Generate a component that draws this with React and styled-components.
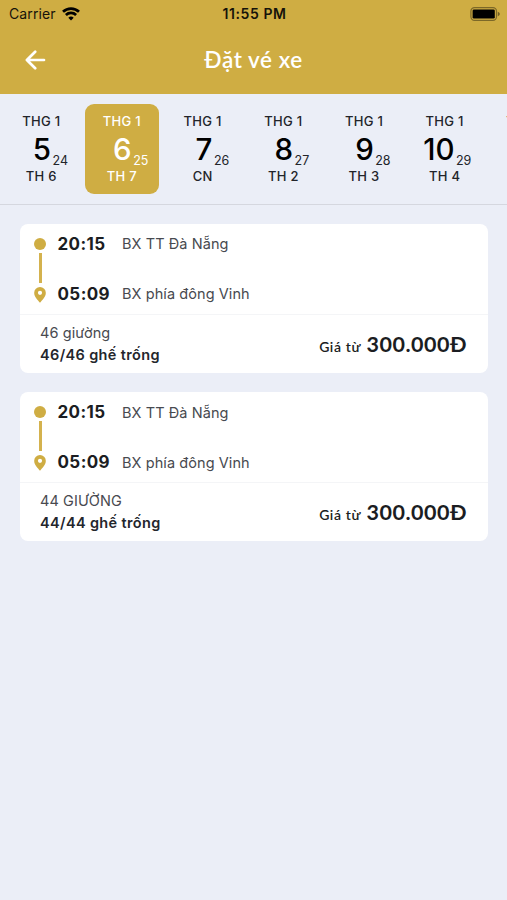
import React from 'react'
import styled, { createGlobalStyle } from 'styled-components'

const days = [
  { id: 1, month: 'THG 1', day: '5', lunar: '24', week: 'TH 6' },
  { id: 2, month: 'THG 1', day: '6', lunar: '25', week: 'TH 7' },
  { id: 3, month: 'THG 1', day: '7', lunar: '26', week: 'CN' },
  { id: 4, month: 'THG 1', day: '8', lunar: '27', week: 'TH 2' },
  { id: 5, month: 'THG 1', day: '9', lunar: '28', week: 'TH 3' },
  { id: 6, month: 'THG 1', day: '10', lunar: '29', week: 'TH 4' },
  { id: 7, month: 'THG 1', day: '11', lunar: '30', week: 'TH 5' },
]

const trips = [
  { id: 1, start: '20:15', from: 'BX TT Đà Nẵng', end: '05:09', to: 'BX phía đông Vinh', type: '46 giường', seats: '46/46 ghế trống', price: '300.000Đ' },
  { id: 2, start: '20:15', from: 'BX TT Đà Nẵng', end: '05:09', to: 'BX phía đông Vinh', type: '44 GIƯỜNG', seats: '44/44 ghế trống', price: '300.000Đ' },
]

const StatusBar = () => (
  <Status>
    <div className='carrier'>
      <span>Carrier</span>
      <svg width='18' height='14' viewBox='0 0 18 14' fill='none' stroke='#000' strokeWidth='2.7'>
        <path d='M1 4.800a11.5 11.5 0 0 1 16 0' />
        <path d='M3.9 8a7.3 7.3 0 0 1 10.2 0' />
        <path d='M9 13.4 6.3 10.7a3.9 3.9 0 0 1 5.4 0z' fill='#000' stroke='none' />
      </svg>
    </div>
    <span className='clock'>11:55 PM</span>
    <div className='battery'>
      <svg width='30' height='14' viewBox='0 0 30 14'>
        <rect x='.9' y='.6' width='25.6' height='12.8' rx='3.6' fill='none' stroke='#000' strokeOpacity='.4' strokeWidth='1.2' />
        <rect x='2.6' y='2.4' width='22.2' height='9.2' rx='1.4' fill='#000' />
        <path d='M27.8 4.8c2.6.8 2.6 3.6 0 4.4z' fill='#000' fillOpacity='.45' />
      </svg>
    </div>
  </Status>
)

const Trip = ({ trip }) => (
  <Card>
    <Route>
      <Track>
        <i className='dot' />
        <i className='line' />
        <svg width='12' height='16' viewBox='0 0 12 16'>
          <path fill='#cfad43' fillRule='evenodd' d='M6 0a5.8 5.8 0 0 0-5.8 5.9C.2 9.7 3.7 12.8 6 15.8c2.3-3 5.8-6.1 5.8-9.9A5.8 5.8 0 0 0 6 0zm0 3.7a2.1 2.1 0 1 1 0 4.2 2.1 2.1 0 0 1 0-4.2z' />
        </svg>
      </Track>
      <Stops>
        <Stop><b>{trip.start}</b><span>{trip.from}</span></Stop>
        <Stop><b>{trip.end}</b><span>{trip.to}</span></Stop>
      </Stops>
    </Route>
    <Info>
      <Seats>
        <span>{trip.type}</span>
        <b>{trip.seats}</b>
      </Seats>
      <Price>
        <small>Giá từ</small>
        <strong>{trip.price}</strong>
      </Price>
    </Info>
  </Card>
)

const App = () => {
  return (
    <Screen>
      <GlobalStyle />
      <StatusBar />
      <Header>
        <svg width='22' height='22' viewBox='0 0 22 22' fill='none' stroke='#fff' strokeWidth='2.7' strokeLinecap='round' strokeLinejoin='round'>
          <path d='M19 11H2.4M10.2 2.7 1.9 11l8.3 8.3' />
        </svg>
        <h1>Đặt vé xe</h1>
      </Header>
      <Days>
        {days.map((d) => (
          <Day key={d.id} $active={d.id === 2}>
            <span>{d.month}</span>
            <div className='date'>
              <b>{d.day}</b>
              <small>{d.lunar}</small>
            </div>
            <span>{d.week}</span>
          </Day>
        ))}
      </Days>
      <List>
        {trips.map((t) => <Trip key={t.id} trip={t} />)}
      </List>
    </Screen>
  )
}

export default App

const GlobalStyle = createGlobalStyle`
  * {
    box-sizing: border-box;
  }
  body {
    margin: 0;
    background: #ebeef7;
  }
`

const Screen = styled.main`
  width: 100%;
  height: 900px;
  overflow: hidden;
  background: #ebeef7;
  font-family: Inter, "Liberation Sans", sans-serif;
  color: #1b1d22;
`

const Status = styled.div`
  height: 27px;
  padding: 0 7px 0 9px;
  display: grid;
  grid-template-columns: 1fr auto 1fr;
  align-items: center;
  background: #cfad43;
  color: #16130a;
  font-size: 14px;
  .carrier {
    display: flex;
    align-items: center;
    gap: 6px;
    letter-spacing: 0.1px;
  }
  .clock {
    font-size: 14px;
    font-weight: 600;
    letter-spacing: 0.6px;
  }
  .battery {
    display: flex;
    justify-content: flex-end;
  }
`

const Header = styled.header`
  height: 67px;
  padding: 0 25px 1px;
  display: grid;
  grid-template-columns: 22px 1fr 22px;
  align-items: center;
  background: #cfad43;
  color: #fff;
  h1 {
    margin: 0;
    text-align: center;
    font-family: Lato, sans-serif;
    font-size: 22.5px;
    line-height: 30px;
    font-weight: 600;
    letter-spacing: 0.55px;
  }
`

const Days = styled.nav`
  height: 111px;
  padding: 10px 0 0 4.5px;
  display: flex;
  gap: 7.2px;
  overflow: hidden;
  border-bottom: 1px solid #d5d7df;
`

const Day = styled.div`
  flex: 0 0 73.5px;
  height: 90px;
  padding-top: 9px;
  border-radius: 9px;
  background: ${(props) => (props.$active ? '#cfad43' : 'transparent')};
  color: ${(props) => (props.$active ? '#fff' : '#22242a')};
  text-align: center;
  font-size: 13px;
  font-weight: 500;
  span {
    display: block;
    line-height: 17px;
    letter-spacing: 0.3px;
  }
  .date {
    display: flex;
    align-items: baseline;
    height: 38px;
    line-height: 38px;
  }
  b {
    width: 46.5px;
    text-align: right;
    font-size: 29.5px;
    font-weight: 500;
    color: ${(props) => (props.$active ? '#fff' : '#000')};
  }
  small {
    padding-left: 1.5px;
    font-size: 12.5px;
    font-weight: 400;
    transform: translateY(5px);
  }
`

const List = styled.section`
  padding: 19px 19.5px 0 20px;
  display: flex;
  flex-direction: column;
  gap: 19.4px;
`

const Card = styled.article`
  height: 149px;
  border-radius: 8px;
  background: #fff;
`

const Route = styled.div`
  height: 91px;
  padding: 0 14px;
  display: flex;
  border-bottom: 1px solid #f4f5f7;
`

const Track = styled.div`
  width: 12px;
  padding-top: 13.5px;
  display: flex;
  flex-direction: column;
  align-items: center;
  .dot {
    width: 12px;
    height: 12px;
    border-radius: 50%;
    background: #cfad43;
  }
  .line {
    width: 3px;
    height: 30px;
    margin: 3px 0 4px;
    background: #d4b24e;
  }
`

const Stops = styled.div`
  padding: 8.3px 0 0 11.5px;
  display: flex;
  flex-direction: column;
  gap: 27px;
`

const Stop = styled.div`
  display: flex;
  align-items: center;
  height: 23px;
  font-size: 14.5px;
  letter-spacing: 0.08px;
  color: #484a50;
  b {
    width: 64.5px;
    font-size: 17px;
    font-weight: 700;
    letter-spacing: 0.4px;
    color: #1b1d22;
  }
`

const Info = styled.div`
  height: 58px;
  padding: 0 20.5px 0 20px;
  display: flex;
  justify-content: space-between;
  align-items: center;
`

const Seats = styled.div`
  display: flex;
  flex-direction: column;
  font-size: 14.5px;
  line-height: 22px;
  letter-spacing: 0.1px;
  color: #484a50;
  b {
    font-weight: 600;
    letter-spacing: 0.36px;
    color: #24262c;
  }
`

const Price = styled.div`
  display: flex;
  align-items: baseline;
  gap: 5.5px;
  padding-bottom: 1px;
  font-family: Lato, sans-serif;
  small {
    font-size: 14px;
    font-weight: 600;
    letter-spacing: 0.6px;
  }
  strong {
    font-size: 21.5px;
    font-weight: 700;
    letter-spacing: 0.5px;
  }
`
